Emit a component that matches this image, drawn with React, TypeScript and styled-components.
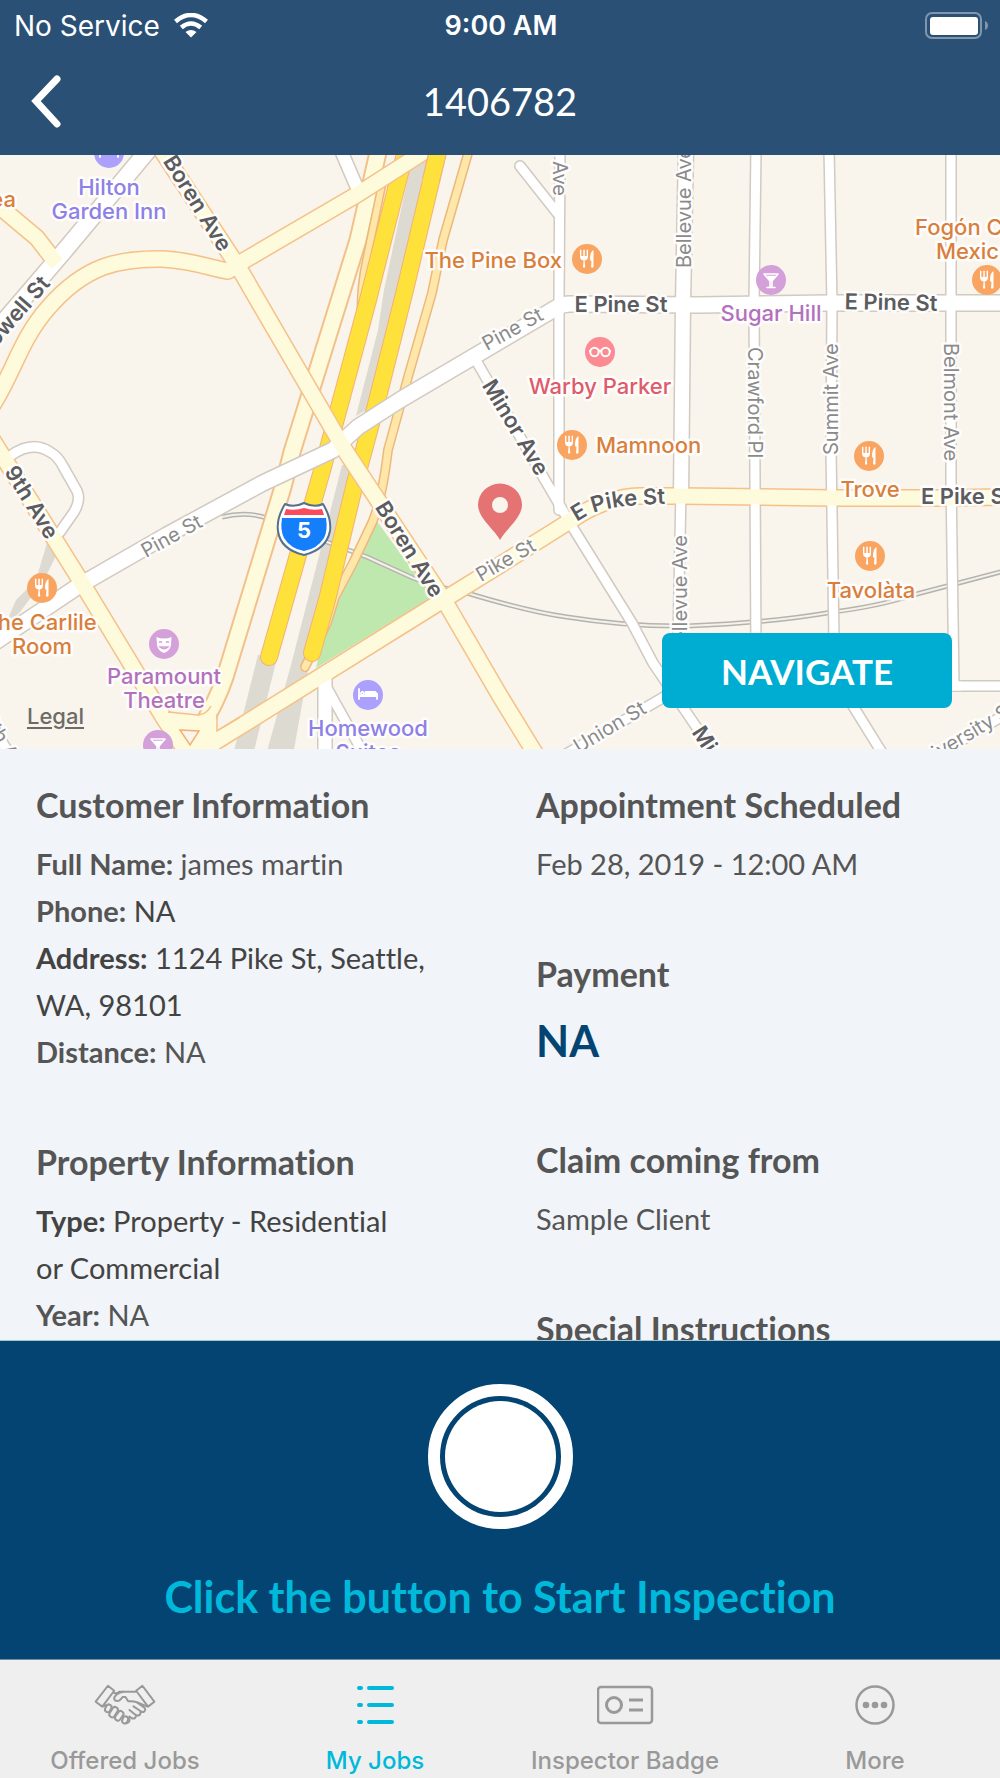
import React from "react";
import styled, { createGlobalStyle } from "styled-components";

const GlobalStyle = createGlobalStyle`
  * { box-sizing: border-box; }
  body { margin: 0; background: #f1f4f8; }
  h1, h2, p { margin: 0; padding: 0; }
`;

const uiFont = `Inter, "Liberation Sans", sans-serif`;
const brandFont = `Lato, "Open Sans", sans-serif`;

const Screen = styled.div`
  display: flex;
  flex-direction: column;
  height: 100vh;
  overflow: hidden;
  font-family: ${brandFont};
  font-variant-ligatures: none;
  color: #555;
`;

/* ---------- header ---------- */

const Header = styled.header`
  flex: none;
  padding-bottom: 4px;
  background: #2a5076;
  color: #fff;
`;

const StatusBar = styled.div`
  display: grid;
  grid-template-columns: 1fr auto 1fr;
  align-items: center;
  height: 51px;
  padding: 0 12px 0 14px;
  font: 400 28px/50px ${uiFont};
`;

const Carrier = styled.div`
  display: flex;
  align-items: center;
  gap: 14px;
`;

const Clock = styled.time`
  font-size: 27px;
  font-weight: 600;
`;

const BatterySlot = styled.div`
  display: flex;
  justify-content: flex-end;
`;

const NavBar = styled.div`
  display: grid;
  grid-template-columns: 1fr auto 1fr;
  align-items: center;
  height: 100px;
  padding: 0 28px;
`;

const BackButton = styled.button`
  justify-self: start;
  display: flex;
  padding: 0;
  border: 0;
  background: none;
  color: inherit;
  cursor: pointer;
`;

const Title = styled.h1`
  font-size: 38px;
  font-weight: 400;
  line-height: 46px;
`;

/* ---------- map ---------- */

const MapArea = styled.section`
  position: relative;
  flex: none;
  height: 594px;
  overflow: hidden;
  background: #f9f4ec;
`;

const MapCanvas = styled.svg`
  display: block;
  width: 100%;
  height: 100%;
  fill: none;
`;

const LegalLink = styled.a`
  position: absolute;
  left: 27px;
  bottom: 20px;
  font: 500 22px/26px ${uiFont};
  color: #6e6b67;
  text-underline-offset: 3px;
`;

const NavigateButton = styled.button`
  position: absolute;
  right: 48px;
  bottom: 41px;
  width: 290px;
  height: 75px;
  border: 0;
  border-radius: 8px;
  background: #00add2;
  color: #fff;
  font: 700 35px/40px ${brandFont};
  cursor: pointer;
`;

const Street = styled.text<{ $major?: boolean }>`
  font-family: ${uiFont};
  font-size: ${(p) => (p.$major ? 22 : 20)}px;
  font-weight: ${(p) => (p.$major ? 600 : 400)};
  fill: ${(p) => (p.$major ? "#5c5c5e" : "#8b8a89")};
  stroke: rgba(255, 255, 255, 0.9);
  stroke-width: 5px;
  stroke-linejoin: round;
  paint-order: stroke;
`;

const PlaceName = styled.text<{ $color: string }>`
  font-family: ${uiFont};
  font-size: 22px;
  font-weight: 500;
  fill: ${(p) => p.$color};
  stroke: rgba(255, 255, 255, 0.9);
  stroke-width: 5px;
  stroke-linejoin: round;
  paint-order: stroke;
`;

/* ---------- details ---------- */

const Details = styled.main`
  flex: 1;
  min-height: 0;
  display: grid;
  grid-template-columns: 1fr 1fr;
  overflow: hidden;
  background: #f1f4f8;
`;

const Column = styled.div`
  display: flex;
  flex-direction: column;
  gap: 67px;
  padding: 36px 36px 0;
`;

const Section = styled.section`
  flex: none;
`;

const SectionTitle = styled.h2`
  margin-bottom: 15px;
  font-size: 34px;
  font-weight: 700;
  line-height: 40px;
`;

const Line = styled.p<{ $dark?: boolean }>`
  font-size: 29px;
  line-height: 47px;
  color: ${(p) => (p.$dark ? "#434343" : "#555")};
`;

const Dark = styled.span`
  color: #434343;
`;

const Amount = styled.p`
  font-size: 43px;
  font-weight: 700;
  line-height: 64px;
  color: #034473;
`;

/* ---------- start inspection ---------- */

const StartPanel = styled.section`
  flex: none;
  display: flex;
  flex-direction: column;
  align-items: center;
  gap: 42px;
  padding: 43px 24px 36px;
  border-top: 1px solid #a3c6cd;
  background: #034473;
`;

const Shutter = styled.button`
  width: 145px;
  height: 145px;
  padding: 5px;
  border: 12px solid #fff;
  border-radius: 50%;
  background: #034473;
  cursor: pointer;
  &::before {
    content: "";
    display: block;
    height: 100%;
    border-radius: 50%;
    background: #fff;
  }
`;

const Prompt = styled.p`
  font-size: 43px;
  font-weight: 700;
  line-height: 52px;
  color: #00b9da;
`;

/* ---------- tab bar ---------- */

const TabBar = styled.nav`
  flex: none;
  display: grid;
  grid-template-columns: repeat(4, 1fr);
  height: 119px;
  border-top: 1px solid #6f8ba3;
  background: #efefef;
`;

const Tab = styled.a<{ $active?: boolean }>`
  display: flex;
  flex-direction: column;
  align-items: center;
  gap: 22px;
  padding-top: 24px;
  color: ${(p) => (p.$active ? "#00b9da" : "#999")};
  font: 500 24px/28px ${uiFont};
  text-decoration: none;
`;

const TabIcon = styled.svg`
  display: block;
  height: 41px;
  fill: none;
  stroke: currentColor;
`;

/* ---------- map data ---------- */

type Road = { d: string; w: number };

const frontage: Road[] = [
  { d: "M379 148 L358 240 L292 452 L283 487 L229 664 Q222 690 208 715 L198 735", w: 15 },
];

const ramps: Road[] = [
  { d: "M469 150 L443 240 L432 293 L408 377 L388 450 Q382 500 372 523 L353 563 L335 597 L327 623 L305 667", w: 7 },
  { d: "M384 175 L366 262 Q361 285 361 310", w: 6 },
];

const interstate: Road[] = [
  { d: "M404 158 L399 177 L368 300 L323 467 L269 657", w: 16 },
  { d: "M439 148 L405 290 L376 405 L355 483 L327 600 L312 653", w: 16 },
];

const whiteRoads: Road[] = [
  { d: "M150 148 L65 250 L-6 333", w: 16 },
  { d: "M340 148 L358 190", w: 12 },
  { d: "M-8 644 L80 585 L167 535 L263 483 L333 450 L358 427 L400 400 L473 357 L556 308 Q562 304 570 304 L700 305 L830 303 L1006 303", w: 15 },
  { d: "M474 357 L545 480 L573 528 L632 623 L653 663 L716 756", w: 9 },
  { d: "M560 148 L559 300 L559 510", w: 9 },
  { d: "M520 166 L558 214", w: 9 },
  { d: "M686 148 L683 304 L681 496", w: 14 },
  { d: "M681 490 L678 640", w: 9 },
  { d: "M756 148 L754 304 L755 480 L756 650", w: 9 },
  { d: "M829 148 L832 304 L831 450 L834 640 L840 685 L884 756", w: 9 },
  { d: "M951 148 L951 480 L954 686 L1006 686", w: 9 },
  { d: "M900 686 L960 686", w: 9 },
  { d: "M10 456 Q32 440 50 452 Q58 456 64 468 L77 491 Q81 500 74 512 L60 532", w: 9 },
  { d: "M-10 722 L12 758", w: 9 },
  { d: "M325 680 L325 756", w: 13 },
  { d: "M327 688 L366 758", w: 9 },
  { d: "M556 760 L700 676", w: 9 },
  { d: "M925 762 L1006 714", w: 9 },
];

const yellowRoads: Road[] = [
  { d: "M-8 199 L6 212 L37 238 L57 264", w: 15 },
  { d: "M-8 406 C14 372 20 340 48 308 C85 265 120 258 163 259 C195 261 210 268 228 271 L245 260 L358 194 L430 148", w: 15 },
  { d: "M160 148 L239 268 L346 452 L447 605 L500 696 L538 758", w: 15 },
  { d: "M-10 436 L82 583 L165 720 L192 760", w: 15 },
  { d: "M196 754 L220 739 L440 602 L500 565 L570 521 Q604 497 640 496 L680 496 L833 498 L947 498 L1006 497", w: 15 },
];

const RoadLayer = ({ roads, color, grow = 0, cap = "butt" }: {
  roads: Road[]; color: string; grow?: number; cap?: "butt" | "round";
}) => (
  <g stroke={color} strokeLinejoin="round" strokeLinecap={cap}>
    {roads.map((r) => <path key={r.d} d={r.d} strokeWidth={r.w + grow} />)}
  </g>
);

const StreetLabel = ({ x, y, angle = 0, anchor = "middle", major, children }: {
  x: number; y: number; angle?: number; anchor?: "start" | "middle" | "end"; major?: boolean; children: string;
}) => (
  <g transform={`translate(${x} ${y}) rotate(${angle})`}>
    <Street $major={major} textAnchor={anchor} dy="8">{children}</Street>
  </g>
);

const glyphs = {
  food: (
    <g fill="#fff" stroke="none">
      <path d="M-7 -9 V-3 Q-7 1 -3.400 1.500 L-4 8 Q-3 9.500 -1.800 8 L-2.400 1.500 Q1 1 1 -3 V-9 Q.3 -10 -.4 -9 V-3 H-2.200 V-9 Q-3 -10 -3.700 -9 V-3 H-5.600 V-9 Q-6.300 -10 -7 -9Z" />
      <path d="M6.500 -9 Q3 -7 3 0 Q3 2 4.500 2 L4 8 Q5.300 9.500 6.500 8Z" />
    </g>
  ),
  bar: (
    <g fill="none" stroke="#fff" strokeWidth="1.600" strokeLinejoin="round" strokeLinecap="round">
      <path d="M-7 -6 H7 L1 1 V7 M-1 7 V1 L-7 -6 M-4 7.500 H4" />
      <path d="M-4.500 -3.500 H4.500 L0 1.500Z" fill="#fff" />
    </g>
  ),
  glasses: (
    <g fill="none" stroke="#fff" strokeWidth="2">
      <circle cx="-5.500" r="4.200" /><circle cx="5.500" r="4.200" />
      <path d="M-1.600 -1 Q0 -2 1.600 -1 M-9.500 -1 H-11 M9.500 -1 H11" />
    </g>
  ),
  mask: (
    <g>
      <path d="M-7.500 -7 Q-4 -5.500 0 -5.500 Q4 -5.500 7.500 -7 L7 1 Q6 7 0 9 Q-6 7 -7 1Z" fill="#fff" stroke="none" />
      <path d="M-5 -1.500 Q-3.500 -3 -2 -1.500 M2 -1.500 Q3.500 -3 5 -1.500 M-4 3 Q0 6.500 4 3Z" fill="none" stroke="#d3a0da" strokeWidth="1.400" />
    </g>
  ),
  bed: (
    <g fill="none" stroke="#fff" strokeWidth="1.800" strokeLinecap="round" strokeLinejoin="round">
      <path d="M-9 -6 V4 M-9 1 H9 M9 4 V-1 L-2 -3 V1" />
      <path d="M-2 -3 H7 L9 -1 V1 H-2Z" fill="#fff" /><circle cx="-5.500" cy="-1.500" r="1.500" />
    </g>
  ),
};

const tints = {
  food: ["#f9a561", "#d97f3c"],
  bar: ["#d3a0da", "#b271bd"],
  glasses: ["#fb8a92", "#de5b69"],
  mask: ["#d3a0da", "#b271bd"],
  bed: ["#aba0fb", "#8d80e6"],
} as const;

type Place = {
  kind: keyof typeof glyphs;
  pin?: [number, number];
  lines: [string, number, number][];
  anchor?: "start" | "middle" | "end";
};

const places: Place[] = [
  { kind: "bed", pin: [109, 153], lines: [["Hilton", 109, 195], ["Garden Inn", 109, 219]] },
  { kind: "food", lines: [["Ikea", 16, 207]], anchor: "end" },
  { kind: "food", pin: [587, 259], lines: [["The Pine Box", 562, 268]], anchor: "end" },
  { kind: "bar", pin: [771, 280], lines: [["Sugar Hill", 771, 321]] },
  { kind: "glasses", pin: [600, 352], lines: [["Warby Parker", 600, 394]] },
  { kind: "food", pin: [572, 445], lines: [["Mamnoon", 596, 453]], anchor: "start" },
  { kind: "food", pin: [987, 280], lines: [["Fogón Cocina", 915, 235], ["Mexicana", 936, 259]], anchor: "start" },
  { kind: "food", pin: [869, 456], lines: [["Trove", 870, 497]] },
  { kind: "food", pin: [870, 556], lines: [["Tavolàta", 871, 598]] },
  { kind: "food", pin: [42, 588], lines: [["The Carlile", 40, 630], ["Room", 42, 654]] },
  { kind: "mask", pin: [164, 644], lines: [["Paramount", 164, 684], ["Theatre", 164, 708]] },
  { kind: "bed", pin: [368, 695], lines: [["Homewood", 368, 736], ["Suites", 368, 760]] },
  { kind: "bar", pin: [158, 745], lines: [] },
];

const CityMap = () => (
  <MapCanvas viewBox="0 155 1000 594" preserveAspectRatio="xMidYMid slice" role="img" aria-label="Map around 1124 Pike St, Seattle">
    <defs>
      <path id="pike-curve" d="M577 522 C598 507 622 504 700 503" />
    </defs>

    {/* freeway deck, tunnels and park */}
    <g fill="#dddad2">
      <path d="M412 158 L431 150 L397 290 L366 410 L356 416 L378 330 L384 290Z" />
      <path d="M342 465 L350 465 L338 540 L310 660 L293 755 L266 755 L291 665 L318 560Z" />
      <path d="M258 655 L277 658 L253 755 L233 755Z" />
      <path d="M47 543 L56 556 L44 580 L20 612 L4 628 L16 600 L36 580Z" />
    </g>
    <path d="M376 520 L432 597 L316 668 L328 615 L345 585 L362 555Z" fill="#bfe8ae" />
    {[["#b5b3ae", 5], ["#f4f1ea", 2]].map(([c, w]) => (
      <path key={c} stroke={c as string} strokeWidth={w}
        d="M222 517 Q245 511 267 518 Q300 530 327 542 L367 557 L413 578 Q440 588 467 593 Q530 612 567 617 Q630 627 687 626 Q770 623 833 612 Q880 606 913 595 L1004 571" />
    ))}

    <RoadLayer roads={frontage} color="#f3c08a" grow={4} />
    <RoadLayer roads={frontage} color="#fdfbdb" />
    <RoadLayer roads={ramps} color="#ecb97c" grow={3} cap="round" />
    <RoadLayer roads={ramps} color="#ffe6a9" cap="round" />
    <RoadLayer roads={interstate} color="#f3b179" grow={2} cap="round" />
    <RoadLayer roads={interstate} color="#ffe13c" cap="round" />

    <RoadLayer roads={whiteRoads} color="#d1cac1" grow={3} cap="round" />
    <RoadLayer roads={yellowRoads} color="#f5c189" grow={3} />
    <RoadLayer roads={whiteRoads} color="#fff" cap="round" />
    <RoadLayer roads={yellowRoads} color="#fdfbdb" />

    <path d="M438 150 L431 180" stroke="#f3b179" strokeWidth="18" />
    <path d="M439 148 L430 184" stroke="#ffe13c" strokeWidth="16" />

    <path d="M166 712 L203 716 L215 700 L217 731 L235 722 L215 755 L182 755Z" fill="#fdfbdb" />
    <path d="M168 712 L198 715 Q207 714 211 706 M217 714 V731 L240 717" stroke="#f5c189" strokeWidth="1.500" />
    <path d="M180 730 L199 731 L190 745Z" fill="#f9f4ec" stroke="#f5b071" strokeWidth="1.500" />

    {/* street names */}
    <StreetLabel x={198} y={203} angle={58} major>Boren Ave</StreetLabel>
    <StreetLabel x={410} y={549} angle={58} major>Boren Ave</StreetLabel>
    <StreetLabel x={32} y={502} angle={58} major>9th Ave</StreetLabel>
    <StreetLabel x={45} y={279} angle={-49} anchor="end" major>Howell St</StreetLabel>
    <StreetLabel x={516} y={427} angle={59} major>Minor Ave</StreetLabel>
    <StreetLabel x={698} y={728} angle={57} anchor="start" major>Minor Ave</StreetLabel>
    <StreetLabel x={621} y={304} major>E Pine St</StreetLabel>
    <StreetLabel x={891} y={302} angle={1} major>E Pine St</StreetLabel>
    <StreetLabel x={921} y={496} anchor="start" major>E Pike St</StreetLabel>
    <Street $major><textPath href="#pike-curve">E Pike St</textPath></Street>
    <StreetLabel x={171} y={535} angle={-29}>Pine St</StreetLabel>
    <StreetLabel x={512} y={328} angle={-29}>Pine St</StreetLabel>
    <StreetLabel x={505} y={559} angle={-30}>Pike St</StreetLabel>
    <StreetLabel x={561} y={196} angle={90} anchor="end">Melrose Ave</StreetLabel>
    <StreetLabel x={683} y={268} angle={-90} anchor="start">Bellevue Ave</StreetLabel>
    <StreetLabel x={679} y={535} angle={-90} anchor="end">Bellevue Ave</StreetLabel>
    <StreetLabel x={756} y={347} angle={90} anchor="start">Crawford Pl</StreetLabel>
    <StreetLabel x={830} y={455} angle={-90} anchor="start">Summit Ave</StreetLabel>
    <StreetLabel x={952} y={343} angle={90} anchor="start">Belmont Ave</StreetLabel>
    <StreetLabel x={609} y={726} angle={-31}>Union St</StreetLabel>
    <StreetLabel x={910} y={767} angle={-31} anchor="start">University St</StreetLabel>
    <StreetLabel x={-11} y={714} angle={60} anchor="start">8th Ave</StreetLabel>

    {/* places */}
    {places.map(({ kind, pin, lines, anchor = "middle" }, i) => (
      <g key={i}>
        {lines.map(([t, x, y]) => (
          <PlaceName key={t} x={x} y={y} $color={tints[kind][1]} textAnchor={anchor}>{t}</PlaceName>
        ))}
        {pin && (
          <g transform={`translate(${pin[0]} ${pin[1]})`}>
            <circle r="15" fill={tints[kind][0]} />
            {glyphs[kind]}
          </g>
        )}
      </g>
    ))}

    {/* interstate shield */}
    <g strokeLinejoin="round">
      <path d="M285 504 Q294 508 304 503 Q314 508 323 504 C329 514 331 524 330 531 C327 546 316 552 304 555 C291 552 280 546 278 531 C277 524 279 514 285 504Z" fill="#fff" stroke="#56708f" strokeWidth="2" />
      <path d="M282 518 H326 Q328 530 324 538 Q317 549 304 551 Q291 549 284 538 Q280 530 282 518Z" fill="#147efb" />
      <path d="M286 509 Q295 511 304 508 Q313 511 322 509 L324 515 H284Z" fill="#fb4b5c" />
      <text x="304" y="538" textAnchor="middle" fill="#fff" fontFamily={uiFont} fontSize="22" fontWeight="700">5</text>
    </g>

    {/* job location */}
    <path fillRule="evenodd" fill="#e57373" d="M500 540 C495 530 478 518 478 505 A22 21.500 0 0 1 522 505 C522 518 505 530 500 540Z M500 497 A8 8 0 1 0 500 513 A8 8 0 1 0 500 497Z" />
  </MapCanvas>
);

const HandshakeIcon = () => (
  <TabIcon viewBox="280 105 187 123" width="62" strokeWidth="6" strokeLinejoin="round" strokeLinecap="round" aria-hidden>
    <path d="M322 110 L341 125 L305 173 L285 158Z M426 110 L462 158 L443 173 L407 125Z" />
    <path d="M341 132 Q350 135 356 128 H405" />
    <path d="M368 128 C350 130 340 143 341 150 C344 158 355 158 361 150 L366 144 H375 L383 157 Q400 156 410 160 L420 164 L440 172" />
    <path d="M410 160 L431 175 Q438 182 431 188 Q426 191 420 186 L399 172 M420 187 Q422 199 412 200 Q407 200 402 195 L387 183 M407 199 Q406 210 396 209 L387 203" />
    <path d="M309 172 L316 168" />
    <rect x="315" y="166" width="16" height="24" rx="8" transform="rotate(28 323 178)" />
    <rect x="331" y="173" width="17" height="33" rx="8" transform="rotate(32 339 189)" />
    <rect x="348" y="185" width="17" height="31" rx="8" transform="rotate(35 356 200)" />
    <rect x="366" y="202" width="16" height="22" rx="8" transform="rotate(22 374 213)" />
    <path d="M376 223 Q388 222 387 212 Q386 206 380 205" />
  </TabIcon>
);

const ListIcon = () => (
  <TabIcon viewBox="0 0 37 41" width="37" strokeWidth="4" strokeLinecap="round" aria-hidden>
    <path d="M2 4 H4 M12 4 H35 M2 21 H4 M12 21 H35 M2 38 H4 M12 38 H35" />
  </TabIcon>
);

const BadgeIcon = () => (
  <TabIcon viewBox="0 0 57 41" width="57" strokeWidth="2" aria-hidden>
    <rect x="1" y="3" width="54" height="36" rx="3" strokeWidth="2.500" />
    <circle cx="17" cy="21" r="7.500" strokeWidth="3" />
    <path d="M32 16 H46 M32 26 H46" strokeWidth="3" />
  </TabIcon>
);

const MoreIcon = () => (
  <TabIcon viewBox="0 0 41 41" width="41" aria-hidden>
    <circle cx="20" cy="21" r="18.500" strokeWidth="2.500" />
    <g fill="currentColor" stroke="none">
      <circle cx="11" cy="21" r="3.300" /><circle cx="20" cy="21" r="3.300" /><circle cx="29" cy="21" r="3.300" />
    </g>
  </TabIcon>
);

const tabs = [
  { label: "Offered Jobs", Icon: HandshakeIcon },
  { label: "My Jobs", Icon: ListIcon, active: true },
  { label: "Inspector Badge", Icon: BadgeIcon },
  { label: "More", Icon: MoreIcon },
];

export default function App() {
  return (
    <Screen>
      <GlobalStyle />
      <Header>
        <StatusBar>
          <Carrier>
            No Service
            <svg width="34" height="25" viewBox="0 0 34 25" fill="none" stroke="#fff" strokeWidth="4.500" aria-hidden>
              <path d="M1.500 8.500 Q17 -4.500 32.500 8.500" />
              <path d="M7.300 14.500 Q17 6.500 26.700 14.500" />
              <path d="M17 24.500 L11.500 19 Q17 14.800 22.500 19Z" fill="#fff" stroke="none" />
            </svg>
          </Carrier>
          <Clock>9:00 AM</Clock>
          <BatterySlot>
            <svg width="63" height="28" viewBox="0 0 63 28" aria-hidden>
              <rect x="1" y="1" width="55" height="25" rx="6" fill="none" stroke="#7f96ad" strokeWidth="2" />
              <rect x="5" y="5" width="48" height="18" rx="3" fill="#fff" />
              <path d="M60 9 Q63 10 63 13.500 Q63 17 60 18Z" fill="#7f96ad" />
            </svg>
          </BatterySlot>
        </StatusBar>
        <NavBar>
          <BackButton aria-label="Back">
            <svg width="36" height="54" viewBox="0 0 36 54" fill="none" stroke="#fff" strokeWidth="7" strokeLinecap="round" aria-hidden>
              <path d="M29 5 L8 27 L29 50" />
            </svg>
          </BackButton>
          <Title>1406782</Title>
        </NavBar>
      </Header>

      <MapArea>
        <CityMap />
        <LegalLink href="#legal">Legal</LegalLink>
        <NavigateButton>NAVIGATE</NavigateButton>
      </MapArea>

      <Details>
        <Column>
          <Section>
            <SectionTitle>Customer Information</SectionTitle>
            <Line><b>Full Name:</b> james martin</Line>
            <Line><b>Phone:</b> <Dark>NA</Dark></Line>
            <Line $dark><b>Address:</b> 1124 Pike St, Seattle,<br />WA, 98101</Line>
            <Line><b>Distance:</b> NA</Line>
          </Section>
          <Section>
            <SectionTitle>Property Information</SectionTitle>
            <Line $dark><b>Type:</b> Property - Residential<br />or Commercial</Line>
            <Line><b>Year:</b> NA</Line>
          </Section>
        </Column>
        <Column>
          <Section>
            <SectionTitle>Appointment Scheduled</SectionTitle>
            <Line>Feb 28, 2019 - 12:00 AM</Line>
          </Section>
          <Section>
            <SectionTitle>Payment</SectionTitle>
            <Amount>NA</Amount>
          </Section>
          <Section>
            <SectionTitle>Claim coming from</SectionTitle>
            <Line>Sample Client</Line>
          </Section>
          <Section>
            <SectionTitle>Special Instructions</SectionTitle>
          </Section>
        </Column>
      </Details>

      <StartPanel>
        <Shutter aria-label="Start Inspection" />
        <Prompt>Click the button to Start Inspection</Prompt>
      </StartPanel>

      <TabBar>
        {tabs.map(({ label, Icon, active }) => (
          <Tab key={label} href="#" $active={active} aria-current={active ? "page" : undefined}>
            <Icon />
            {label}
          </Tab>
        ))}
      </TabBar>
    </Screen>
  );
}
